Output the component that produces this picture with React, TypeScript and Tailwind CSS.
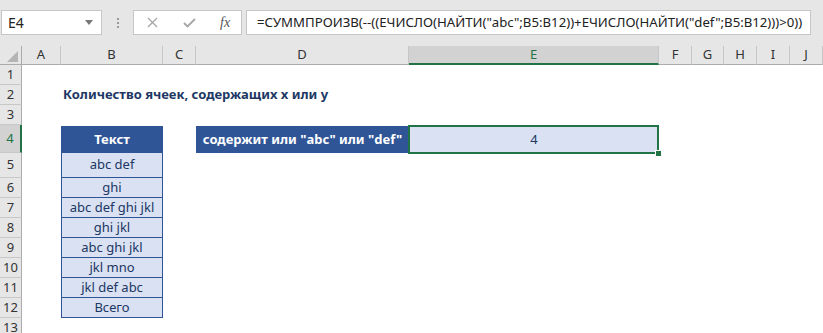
import React from 'react';

const cols = ['A', 'B', 'C', 'D', 'E', 'F', 'G', 'H', 'I', 'J'];
const items = ['abc def', 'ghi', 'abc def ghi jkl', 'ghi jkl', 'abc ghi jkl', 'jkl mno', 'jkl def abc', 'Всего'];
const formula = '=СУММПРОИЗВ(--((ЕЧИСЛО(НАЙТИ("abc";B5:B12))+ЕЧИСЛО(НАЙТИ("def";B5:B12)))>0))';

const cellFont = { fontFamily: '"Noto Sans", "Open Sans", sans-serif' };

function RowHead({ n, active }: { n: number; active?: boolean }) {
  return (
    <div
      className={
        'flex items-center justify-center border-b border-[#c8c8c8] text-[13px] text-[#333] ' +
        (active ? 'bg-[#d2d2d2] border-r-2 border-r-[#217346] text-[#217346]' : 'bg-[#e6e6e6] border-r border-r-[#ababab]')
      }
    >
      {n}
    </div>
  );
}

function Empty() {
  return <div className="bg-white" />;
}

export default function App() {
  const rows: React.ReactNode[] = [];

  // rows 1-3
  for (let r = 1; r <= 3; r++) {
    rows.push(<RowHead key={`h${r}`} n={r} />);
    for (let c = 0; c < 10; c++) {
      if (r === 2 && c === 1) {
        rows.push(
          <div key={`c${r}${c}`} className="relative flex items-end pb-[1px]">
            <span className="whitespace-nowrap pl-[2px] text-[13px] font-bold text-[#203764]">
              Количество ячеек, содержащих x или y
            </span>
          </div>
        );
      } else {
        rows.push(<Empty key={`c${r}${c}`} />);
      }
    }
  }

  // row 4
  rows.push(<RowHead key="h4" n={4} active />);
  rows.push(<Empty key="c4a" />);
  rows.push(
    <div key="c4b" className="pt-[1px]">
      <div className="flex h-full items-center justify-center bg-[#2f5597] text-[13px] font-bold text-white">Текст</div>
    </div>
  );
  rows.push(<Empty key="c4c" />);
  rows.push(
    <div key="c4d" className="pt-[1px]">
      <div className="flex h-full items-center justify-center whitespace-nowrap bg-[#2f5597] text-[13px] font-bold text-white">
        содержит или "abc" или "def"
      </div>
    </div>
  );
  rows.push(
    <div key="c4e" className="relative pt-[1px]">
      <div className="flex h-full items-center justify-center bg-[#d9e1f2] text-[13px] text-[#203764]">4</div>
      <div className="pointer-events-none absolute -left-[1px] top-0 -bottom-[1px] right-0 border-2 border-[#217346]" />
      <div className="absolute -right-[3px] -bottom-[4px] z-10 h-[7px] w-[7px] border border-white bg-[#217346]" />
    </div>
  );
  for (let c = 5; c < 10; c++) rows.push(<Empty key={`c4${c}`} />);

  // rows 5-13
  for (let r = 5; r <= 13; r++) {
    rows.push(<RowHead key={`h${r}`} n={r} />);
    for (let c = 0; c < 10; c++) {
      if (c === 1 && r <= 12) {
        rows.push(
          <div
            key={`c${r}${c}`}
            className="flex items-center justify-center border-x border-b border-[#2f5597] bg-[#d9e1f2] text-[13px] text-[#203764]"
          >
            {items[r - 5]}
          </div>
        );
      } else {
        rows.push(<Empty key={`c${r}${c}`} />);
      }
    }
  }

  return (
    <div className="h-[333px] w-[823px] overflow-hidden bg-white" style={cellFont}>
      {/* formula bar */}
      <div className="flex h-[46px] items-start bg-[#e6e6e6] pt-[10px]">
        <div className="ml-[1px] flex h-[25px] w-[101px] items-center justify-between border border-[#c6c6c6] bg-white pl-[6px] pr-[8px] text-[14px] text-[#222]">
          <span>E4</span>
          <svg width="8" height="5" viewBox="0 0 8 5">
            <path d="M0 0 L8 0 L4 5 Z" fill="#777" />
          </svg>
        </div>
        <div className="flex h-[25px] w-[31px] flex-col items-center justify-center gap-[2px]">
          <span className="h-[2px] w-[2px] bg-[#9a9a9a]" />
          <span className="h-[2px] w-[2px] bg-[#9a9a9a]" />
          <span className="h-[2px] w-[2px] bg-[#9a9a9a]" />
        </div>
        <div className="flex h-[25px] w-[109px] items-center border border-[#c6c6c6] bg-white">
          <svg className="ml-[13px]" width="11" height="11" viewBox="0 0 11 11">
            <path d="M1 1 L10 10 M10 1 L1 10" stroke="#a6a6a6" strokeWidth="1.3" />
          </svg>
          <svg className="ml-[25px]" width="13" height="10" viewBox="0 0 13 10">
            <path d="M1 5 L4.5 8.5 L12 1" stroke="#a6a6a6" strokeWidth="1.8" fill="none" />
          </svg>
          <span
            className="ml-[24px] text-[14px] italic text-[#555]"
            style={{ fontFamily: '"Liberation Serif", serif' }}
          >
            fx
          </span>
        </div>
        <div className="ml-[4px] flex h-[25px] w-[565px] items-center overflow-hidden whitespace-nowrap border border-[#c6c6c6] bg-white pl-[10px] text-[13.2px] text-[#222]">
          {formula}
        </div>
      </div>

      {/* sheet */}
      <div className="grid grid-cols-[22px_39px_102px_33px_213px_250px_33px_32px_33px_33px_33px] grid-rows-[19px_20px_20px_20px_28px_25px_20px_20px_20px_20px_20px_20px_20px_20px]">
        <div className="relative border-r border-b border-[#ababab] bg-[#e6e6e6]">
          <svg className="absolute right-[3px] bottom-[2px]" width="11" height="11" viewBox="0 0 11 11">
            <path d="M11 0 L11 11 L0 11 Z" fill="#b4b4b4" />
          </svg>
        </div>
        {cols.map((c) => (
          <div
            key={c}
            className={
              'flex items-center justify-center border-r border-r-[#c6c6c6] text-[13px] ' +
              (c === 'E'
                ? 'border-b-2 border-b-[#217346] bg-[#d2d2d2] text-[#217346]'
                : 'border-b border-b-[#ababab] bg-[#e6e6e6] text-[#333]')
            }
          >
            {c}
          </div>
        ))}
        {rows}
      </div>
    </div>
  );
}
